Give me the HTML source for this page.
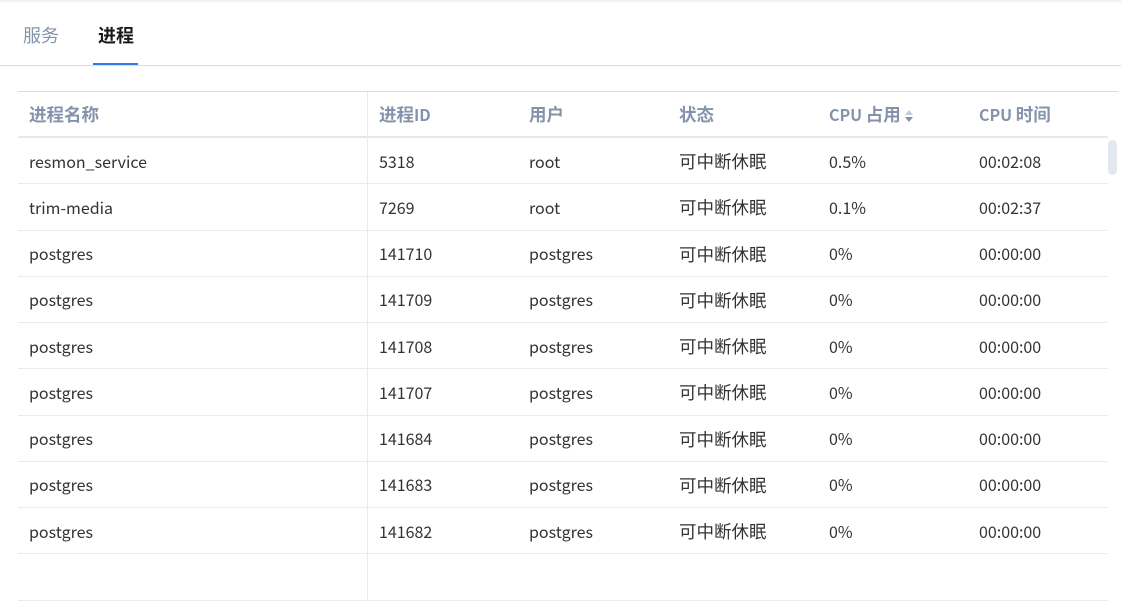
<!DOCTYPE html>
<html><head><meta charset="utf-8"><style>
body{margin:0;width:1121px;height:570px;overflow:hidden;background:#fff;font-family:"Noto Sans CJK SC","Liberation Sans",sans-serif;position:relative}
.top{position:absolute;left:0;top:0;width:1121px;height:2px;background:#eef1f5}
.tab{position:absolute;top:22px;font-size:18px;line-height:26px}
.div{position:absolute;left:0;top:65px;width:1121px;height:1px;background:#d8dde5}
.ul{position:absolute;left:93px;top:63px;width:45px;height:2px;background:#2f7bea}
.tl{position:absolute;left:18px;top:91px;width:1100px;height:1px;background:#d8dde5}
table{position:absolute;left:18px;top:92px;border-collapse:collapse;width:1090px;font-size:16px;color:#333}
th,td{line-height:20px;vertical-align:middle}
th{height:44px;text-align:left;padding:0 0 0 11px;color:#8493ab;font-weight:bold;border-bottom:2px solid #e3e8ef}
td{height:45.25px;padding:0 0 0 11px;border-bottom:1px solid #e8ecf1}
th:first-child,td:first-child{border-right:1px solid #e8ecf1;width:338px}
.c{font-size:17.5px}
td span.c{position:relative;top:1px}
.sb{position:absolute;left:1108px;top:140px;width:9px;height:35px;border-radius:5px;background:#e3e8ef}
</style></head><body>
<div class="top"></div>
<div class="tab" style="left:23px;color:#8493ab">服务</div>
<div class="tab" style="left:98px;color:#1a1a1a;font-weight:bold">进程</div>
<div class="div"></div><div class="ul"></div>
<div class="tl"></div>
<table>
<tr><th><span class="c">进程名称</span></th><th style="width:139px"><span class="c">进程</span>ID</th><th style="width:139px"><span class="c">用户</span></th><th style="width:139px"><span class="c">状态</span></th><th style="width:139px">CPU <span class="c">占用</span><svg width="10" height="14" viewBox="0 0 10 14" style="vertical-align:-2px;margin-left:3px"><path d="M5 1L9 6H1Z" fill="#c5ccd8"/><path d="M5 13L9 8H1Z" fill="#8493ab"/></svg></th><th>CPU <span class="c">时间</span></th></tr>
<tr><td>resmon_service</td><td>5318</td><td>root</td><td><span class="c">可中断休眠</span></td><td>0.5%</td><td>00:02:08</td></tr>
<tr><td>trim-media</td><td>7269</td><td>root</td><td><span class="c">可中断休眠</span></td><td>0.1%</td><td>00:02:37</td></tr>
<tr><td>postgres</td><td>141710</td><td>postgres</td><td><span class="c">可中断休眠</span></td><td>0%</td><td>00:00:00</td></tr>
<tr><td>postgres</td><td>141709</td><td>postgres</td><td><span class="c">可中断休眠</span></td><td>0%</td><td>00:00:00</td></tr>
<tr><td>postgres</td><td>141708</td><td>postgres</td><td><span class="c">可中断休眠</span></td><td>0%</td><td>00:00:00</td></tr>
<tr><td>postgres</td><td>141707</td><td>postgres</td><td><span class="c">可中断休眠</span></td><td>0%</td><td>00:00:00</td></tr>
<tr><td>postgres</td><td>141684</td><td>postgres</td><td><span class="c">可中断休眠</span></td><td>0%</td><td>00:00:00</td></tr>
<tr><td>postgres</td><td>141683</td><td>postgres</td><td><span class="c">可中断休眠</span></td><td>0%</td><td>00:00:00</td></tr>
<tr><td>postgres</td><td>141682</td><td>postgres</td><td><span class="c">可中断休眠</span></td><td>0%</td><td>00:00:00</td></tr>
<tr><td></td><td></td><td></td><td></td><td></td><td></td></tr>
</table>
<div class="sb"></div>
</body></html>
